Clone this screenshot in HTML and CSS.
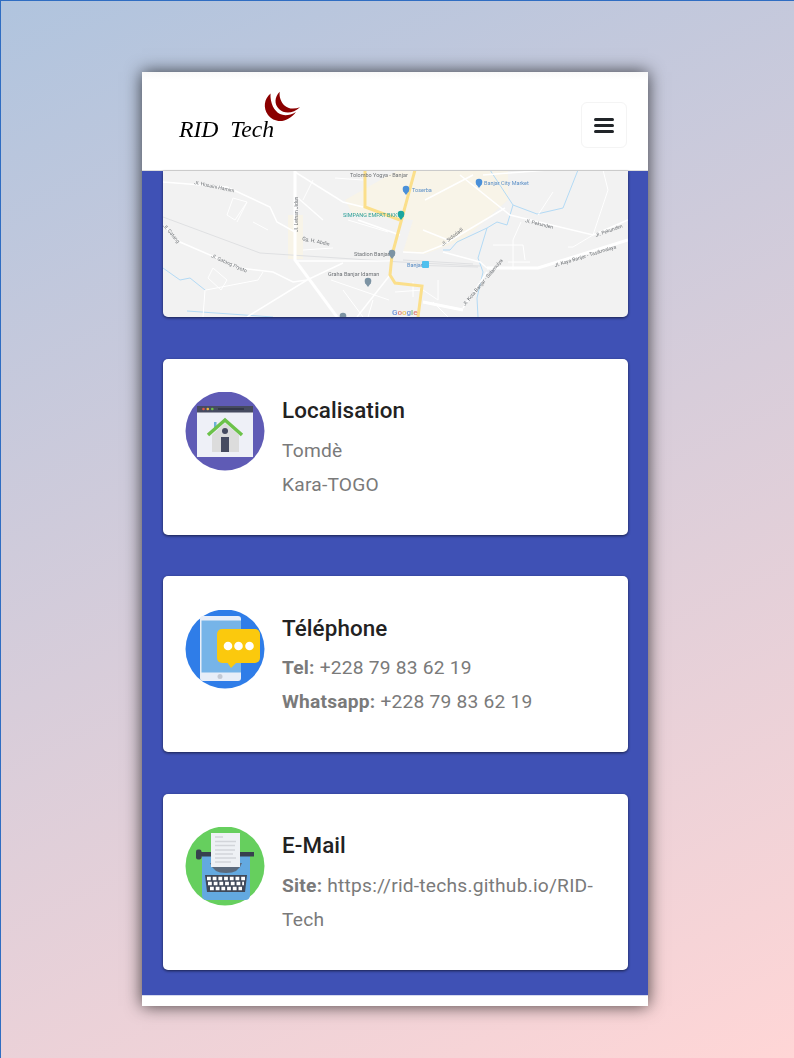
FILE: index.html
```html
<!DOCTYPE html>
<html lang="fr">
<head>
<meta charset="utf-8">
<title>RID Tech</title>
<link rel="stylesheet" href="styles.css">
</head>
<body>
<div class="phone">
  <header class="topbar">
    <a class="logo">
      <span class="logo-text">RID&nbsp; Tech</span>
      <svg class="logo-mark" viewBox="0 0 42 36" width="42" height="36">
        <path class="crescent" d="M10.500 5.500C4 11 3 20 8 27C14 35 27 36 36 24C30 27.500 24 28 20 26C14 23 10 15 10.500 5.500Z"/>
        <path class="crescent" d="M19.700 3.700C14.500 9 14 16 19 21C24 26 33 26 40 19.300C34 21.500 28 21 24.500 17.500C21 14 19 9 19.700 3.700Z"/>
      </svg>
    </a>
    <button class="menu-btn" aria-label="Menu"><span></span><span></span><span></span></button>
  </header>

  <main class="content">
    <div class="map-card">
      <svg class="map" viewBox="0 1 465 146" width="465" height="146">
        <rect y="0" width="465" height="147" fill="#f2f2f2"/>
        <path class="beige" d="M182 30L235 0H345V30L300 70L262 84L240 82L250 50L190 45Z"/>
        <rect class="beige" x="125" y="45" width="15" height="44"/>
        <path class="rail" d="M0 47L97 83L237 92L317 96"/>
        <path class="rail" d="M240 90L310 94M245 95L315 97"/>
        <path class="water" d="M0 98L17 110L27 108L42 120"/>
        <path class="water" d="M24 141L110 147"/>
        <path class="water" d="M327 0L350 35L374 44L400 38L415 0"/>
        <path class="water" d="M350 35L344 55L334 52L324 58L315 88L320 102L314 128L315 147"/>
        <path class="water" d="M324 58L294 72L287 80L280 80"/>
        <path class="road" d="M0 12L64 17L107 37L114 52L132 62"/>
        <path class="road" d="M0 55L17 72L77 98L110 102L130 112L144 110L180 93"/>
        <path class="road" d="M84 147L144 110"/>
        <path class="road" d="M132 91H227"/>
        <path class="road" d="M194 147L227 105"/>
        <path class="road" d="M132 2L180 32L200 37"/>
        <path class="road" d="M135 28L160 50M195 50L237 65"/>
        <path class="road" d="M297 5L347 45L430 65L465 50"/>
        <path class="road" d="M240 82L260 83L280 75L342 38"/>
        <path class="road" d="M280 82L317 92L324 98"/>
        <path class="road" d="M300 138L324 102"/>
        <path class="road" d="M262 30L310 5M260 60L285 70M320 5L385 0"/>
        <path class="thin" d="M70 28L84 32L72 50L64 45ZM84 32L74 52M90 52L105 60M50 98L64 110L58 120L45 108Z"/>
        <path class="thin" d="M43 120L95 110L100 102M42 120L40 147M140 80L170 78M168 110L226 130M180 120L200 147M210 130L205 147M172 8L200 10"/>
        <path class="thin" d="M150 10L140 30M185 50L225 62M350 100V70L358 52M330 75H360L362 90M345 92H367M430 65L410 77H405M440 0L445 20L430 65M390 22L375 45"/>
        <path class="thin" d="M232 122L260 120L275 130M250 112V127M275 110V130M270 132L285 147"/>
        <path class="main" d="M132 0V90L174 147" stroke="#fff" stroke-width="3"/>
        <path class="main" d="M324 98H375L465 70" stroke="#fff" stroke-width="3"/>
        <path class="main" d="M260 132L300 140" stroke="#fff" stroke-width="3"/>
        <path class="main" d="M202 0V37L237 50" stroke="#fbdf8b" stroke-width="3"/>
        <path class="main" d="M252 0L229 85L227 105L232 113L259 116L255 147" stroke="#fbdf8b" stroke-width="3"/>
        <g class="pin-blue"><circle cx="243" cy="19" r="3.300"/><path d="M240 21L243 25L246 21Z"/></g>
        <g class="pin-blue"><circle cx="316" cy="12" r="3.300"/><path d="M313 14L316 18L319 14Z"/></g>
        <g class="pin-teal"><circle cx="238" cy="44" r="3.300"/><path d="M235 46L238 50L241 46Z"/></g>
        <g class="pin-grey"><circle cx="229" cy="83" r="3.300"/><path d="M226 85L229 89L232 85Z"/></g>
        <g class="pin-grey"><circle cx="205" cy="111" r="3.300"/><path d="M202 113L205 117L208 113Z"/></g>
        <g class="pin-grey"><circle cx="180" cy="146" r="3.300"/></g>
        <rect class="station" x="259" y="91" width="7" height="7" rx="1"/>
        <text class="lbl" x="187" y="6.500">Tolombo Yogya - Banjar</text>
        <text class="lbl lbl-blue" x="249" y="22">Toserba</text>
        <text class="lbl lbl-blue" x="321" y="15">Banjar City Market</text>
        <text class="lbl lbl-teal" x="180" y="47">SIMPANG EMPAT BKK</text>
        <text class="lbl" x="191" y="86">Stadion Banjar</text>
        <text class="lbl" x="165" y="106">Graha Banjar Idaman</text>
        <text class="lbl lbl-blue" x="244" y="97">Banjar</text>
        <text class="lbl lbl-sm" x="139" y="70" transform="rotate(12 139 70)">Gg. H. Abdin</text>
        <text class="lbl lbl-sm" x="31" y="14" transform="rotate(12 31 14)">Jl. Husaini Hamim</text>
        <text class="lbl lbl-sm" x="48" y="87" transform="rotate(24 48 87)">Jl. Gatang Pryoto</text>
        <text class="lbl lbl-sm" x="0" y="56" transform="rotate(50 0 56)">Jl. Gatang</text>
        <text class="lbl lbl-sm" x="135" y="62" transform="rotate(-90 135 62)">Jl. Letnan Jidun</text>
        <text class="lbl lbl-sm" x="362" y="52" transform="rotate(14 362 52)">Jl. Pekunden</text>
        <text class="lbl lbl-sm" x="433" y="67" transform="rotate(-20 433 67)">Jl. Pekunden</text>
        <text class="lbl lbl-sm" x="392" y="97" transform="rotate(-17 392 97)">Jl. Kaya Banjar - Tasikmalaya</text>
        <text class="lbl lbl-sm" x="302" y="136" transform="rotate(-50 302 136)">Jl. Kota Banjar - Sidamulya</text>
        <text class="lbl lbl-sm" x="280" y="76" transform="rotate(-38 280 76)">Jl. Sidodadi</text>
        <text class="google" x="229" y="145"><tspan fill="#6d92d8">G</tspan><tspan fill="#e07d73">o</tspan><tspan fill="#ecc25a">o</tspan><tspan fill="#6d92d8">g</tspan><tspan fill="#74b57f">l</tspan><tspan fill="#e07d73">e</tspan></text>
      </svg>
    </div>

    <section class="card">
      <svg class="icon" viewBox="0 0 80 80" width="80" height="80">
        <circle cx="40" cy="39" r="39.500" fill="#5f5bb5"/>
        <rect x="12" y="14" width="56" height="51" fill="#eef0f7"/>
        <rect x="12" y="14" width="56" height="6.500" fill="#464b60"/>
        <circle cx="18.500" cy="17" r="1.300" fill="#e2574c"/>
        <circle cx="22.800" cy="17" r="1.300" fill="#f2b63c"/>
        <circle cx="27.300" cy="17" r="1.300" fill="#6cc24a"/>
        <rect x="33" y="16" width="26" height="2" fill="#33374a"/>
        <rect x="29" y="30" width="2.500" height="7" fill="#6fb0d8"/>
        <path d="M27 43L40 31L54 43V60H27Z" fill="#dcdcdc"/>
        <path d="M23 43L40 28L57 43" fill="none" stroke="#6cc24a" stroke-width="3.500"/>
        <circle cx="40" cy="39" r="3" fill="#464b60"/>
        <rect x="36" y="45" width="8" height="15" fill="#464b60"/>
      </svg>
      <div class="info">
        <h3>Localisation</h3>
        <p>Tomdè</p>
        <p>Kara-TOGO</p>
      </div>
    </section>

    <section class="card">
      <svg class="icon" viewBox="0 0 80 80" width="80" height="80">
        <circle cx="40" cy="39" r="39.500" fill="#2f7de8"/>
        <rect x="15" y="6" width="41" height="65" rx="3" fill="#e8eef8"/>
        <rect x="16.500" y="10.500" width="39.500" height="52" fill="#76b4e8"/>
        <circle cx="35" cy="66.500" r="2.500" fill="#c3c9d4"/>
        <rect x="32" y="19" width="43" height="34" rx="5" fill="#fbc90d"/>
        <path d="M42 52H52L46 58Z" fill="#fbc90d"/>
        <circle cx="43" cy="36" r="4.300" fill="#fff"/>
        <circle cx="53.500" cy="36" r="4.300" fill="#fff"/>
        <circle cx="64.500" cy="36" r="4.300" fill="#fff"/>
      </svg>
      <div class="info">
        <h3>Téléphone</h3>
        <p><strong>Tel:</strong> +228 79 83 62 19</p>
        <p><strong>Whatsapp:</strong> +228 79 83 62 19</p>
      </div>
    </section>

    <section class="card">
      <svg class="icon" viewBox="0 0 80 80" width="80" height="80">
        <circle cx="40" cy="39" r="39.500" fill="#66cf5e"/>
        <path d="M17 28H65V68Q65 73 60 73H22Q17 73 17 68Z" fill="#63a9e0"/>
        <path d="M25 36H57Q54 46 41 46Q28 46 25 36Z" fill="#5c6a7c"/>
        <rect x="14" y="25" width="55" height="4.500" fill="#37404e"/>
        <rect x="11" y="22.500" width="5.500" height="10" rx="2" fill="#37404e"/>
        <rect x="26" y="6" width="29" height="34" fill="#eef1f5"/>
        <path d="M30 10H38M30 14.500H51M30 18.500H50M30 23H50M30 27H48M30 31H51M30 35H46" stroke="#d2d5da" stroke-width="1.500" fill="none"/>
        <path d="M20 48H62L60 65H22Z" fill="#3f4859"/>
        <path d="M22 51.500H60.500" stroke="#fff" stroke-width="3.300" stroke-dasharray="3.800 1.900" fill="none"/>
        <path d="M23 56.500H59" stroke="#fff" stroke-width="3.300" stroke-dasharray="3.800 1.900" fill="none"/>
        <path d="M25 61.500H57" stroke="#fff" stroke-width="3.300" stroke-dasharray="3.800 1.900" fill="none"/>
      </svg>
      <div class="info">
        <h3>E-Mail</h3>
        <p class="wrap"><strong>Site:</strong> https://rid-techs.github.io/RID-Tech</p>
      </div>
    </section>
  </main>
  <div class="foot"></div>
</div>
</body>
</html>
```
FILE: styles.css
```css
* { box-sizing: border-box; }
html, body { margin: 0; padding: 0; height: 100%; }
body {
  width: 794px;
  height: 1058px;
  overflow: hidden;
  border-top: 1px solid #2f6dc2;
  border-left: 1px solid #2f6dc2;
  padding: 71px 0 0 141px;
  background: linear-gradient(155deg, #b0c4de 0%, #ffd6d6 100%);
  font-family: Roboto, "Liberation Sans", sans-serif;
}
.phone {
  width: 506px;
  height: 934px;
  background: #fff;
  box-shadow: 0 0 16px rgba(0, 0, 0, .72);
  display: flex;
  flex-direction: column;
}
.topbar {
  height: 99px;
  flex: none;
  display: flex;
  align-items: flex-start;
  justify-content: space-between;
  padding: 30px 21px 0 37px;
  background: linear-gradient(#f8f8f8 0, #fff 8px);
  border-bottom: 1px solid #dedede;
}
.logo { display: block; position: relative; width: 122px; height: 44px; filter: blur(.3px); }
.logo-text {
  position: absolute;
  left: 0;
  top: 13px;
  font: italic 23.700px/28px "Liberation Serif", serif;
  color: #000;
  white-space: nowrap;
}
.logo-mark { position: absolute; left: 81px; top: -14px; }
.crescent { fill: #8b0000; }
.menu-btn {
  width: 46px;
  height: 46px;
  padding: 0 12px;
  background: #fff;
  border: 1px solid #f4f4f4;
  border-radius: 6px;
  display: flex;
  flex-direction: column;
  justify-content: center;
  gap: 3px;
}
.menu-btn span { display: block; height: 3px; border-radius: 2px; background: #212529; }
.content {
  flex: 1;
  background: #3f51b5;
  padding: 0 20px 0 21px;
  display: flex;
  flex-direction: column;
  gap: 41.5px;
}
.map-card {
  height: 146px;
  flex: none;
  border-radius: 0 0 5px 5px;
  overflow: hidden;
  margin-bottom: .25px;
  box-shadow: 0 1px 3px rgba(0, 0, 0, .6);
}
.map { display: block; filter: blur(.5px); }
.beige { fill: #f8f4e8; }
.rail { fill: none; stroke: #dfe0e2; stroke-width: 1; }
.water { fill: none; stroke: #b3daf5; stroke-width: 1; }
.road { fill: none; stroke: #fff; stroke-width: 1.500; }
.thin { fill: none; stroke: #fff; stroke-width: 1; }
.main { fill: none; }
.pin-blue { fill: #4a90d9; }
.pin-teal { fill: #1aa6a0; }
.pin-grey { fill: #7c93a3; }
.station { fill: #4fc0ee; }
.lbl { font: 5.500px Roboto, sans-serif; fill: #6f7377; }
.lbl-sm { font-size: 5px; }
.lbl-blue { fill: #5b8fc7; }
.lbl-teal { fill: #2a9d97; font-size: 5.500px; }
.google { font: 500 8px Roboto, sans-serif; }
.card {
  height: 176px;
  flex: none;
  background: #fff;
  border-radius: 5px;
  box-shadow: 0 1px 3px rgba(0, 0, 0, .6);
  padding: 33.300px 22px 0;
  display: flex;
  align-items: flex-start;
  gap: 17px;
}
.icon { flex: none; }
.info { flex: 1; min-width: 0; }
.info h3 {
  margin: 4.400px 0 9.200px;
  font-size: 22.400px;
  line-height: 28px;
  font-weight: 500;
  letter-spacing: .1px;
  color: #222;
}
.info p {
  margin: 0;
  font-size: 19.200px;
  line-height: 34px;
  letter-spacing: .22px;
  color: #7a7a7a;
}
.info strong { font-weight: 700; }
.foot {
  height: 11px;
  flex: none;
  border-top: 1px solid #d5d9ee;
  background: #fff;
}
```
